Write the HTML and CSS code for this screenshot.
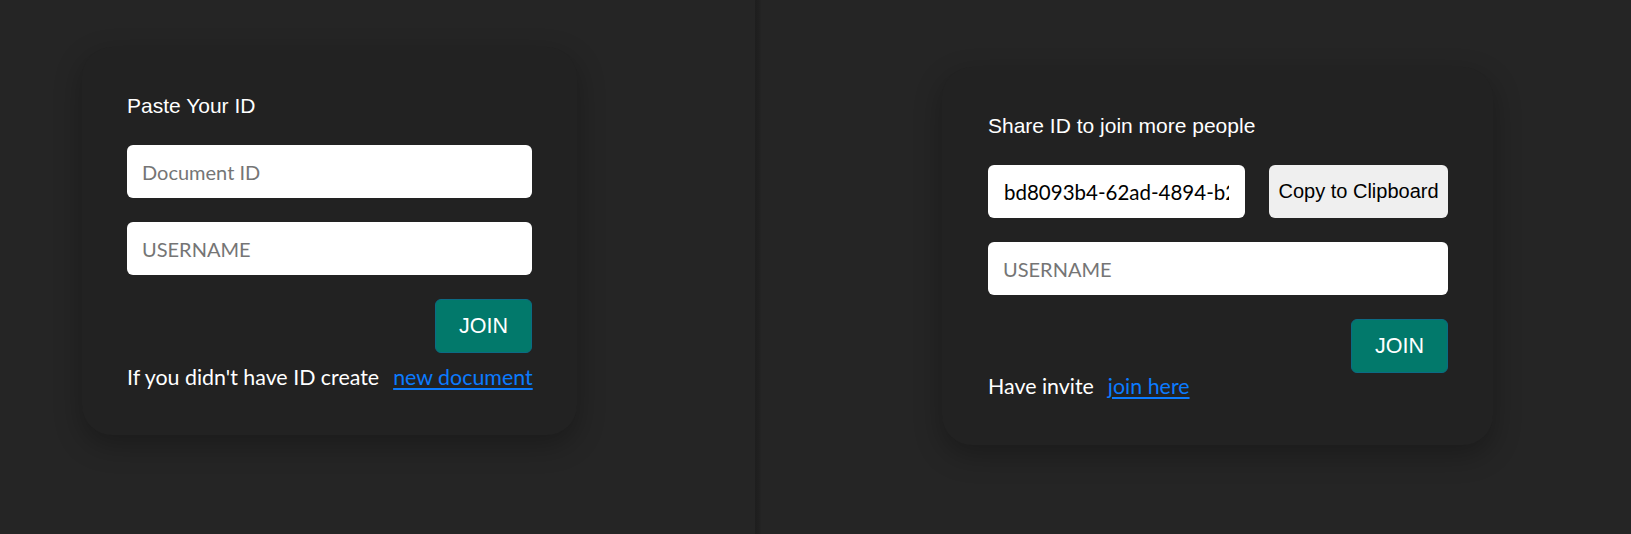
FILE: index.html
```html
<!DOCTYPE html>
<html lang="en">
<head>
<meta charset="utf-8">
<title>Join document</title>
<link rel="stylesheet" href="styles.css">
</head>
<body>
  <main class="split">
    <section class="panel panel-left">
      <form class="card card-join">
        <h2 class="card-title">Paste Your ID</h2>
        <input class="field field-first" type="text" placeholder="Document ID">
        <input class="field" type="text" placeholder="USERNAME">
        <div class="actions">
          <button class="btn-join" type="button">JOIN</button>
        </div>
        <p class="hint hint-left">If you didn't have ID create<a class="link" href="#">new document</a></p>
      </form>
    </section>
    <div class="divider"></div>
    <section class="panel panel-right">
      <form class="card card-share">
        <h2 class="card-title">Share ID to join more people</h2>
        <div class="id-row">
          <input class="field field-id" type="text" value="bd8093b4-62ad-4894-b212-5a7c9e1f03d4" readonly>
          <button class="btn-copy" type="button">Copy to Clipboard</button>
        </div>
        <input class="field" type="text" placeholder="USERNAME">
        <div class="actions">
          <button class="btn-join" type="button">JOIN</button>
        </div>
        <p class="hint hint-right">Have invite<a class="link" href="#">join here</a></p>
      </form>
    </section>
  </main>
</body>
</html>
```

FILE: styles.css
```css
* {
  box-sizing: border-box;
}

html, body {
  margin: 0;
  height: 100%;
}

body {
  background: #252525;
  font-family: "Liberation Sans", Arial, sans-serif;
  overflow: hidden;
}

.split {
  display: flex;
  height: 534px;
}

.panel {
  height: 100%;
}

.panel-left {
  width: 755px;
  padding: 47px 0 0 82px;
}

.panel-right {
  flex: 1;
  padding: 67px 0 0 181px;
}

.divider {
  width: 6px;
  height: 100%;
  background: linear-gradient(to right, #1e1e1e, #202020 60%, #242424);
}

.card {
  background: #222222;
  border-radius: 30px;
  box-shadow: 0 10px 28px rgba(0, 0, 0, 0.28);
  display: flex;
  flex-direction: column;
}

.card-join {
  width: 495px;
  padding: 47px 45px 46px 45px;
}

.card-share {
  width: 551px;
  padding: 47px 45px 47px 46px;
}

.card-title {
  margin: 0 0 27px;
  font-family: "Liberation Sans", Arial, sans-serif;
  font-weight: 400;
  font-size: 21px;
  line-height: 24px;
  color: #ffffff;
}

.field {
  display: block;
  width: 100%;
  height: 53px;
  border: none;
  border-radius: 6px;
  background: #ffffff;
  padding: 0 15px;
  font-family: "Lato", "Open Sans", sans-serif;
  font-size: 20px;
  color: #000000;
  outline: none;
}

.field::placeholder {
  color: #757575;
}

.field-first {
  margin-bottom: 24px;
}

.id-row {
  display: flex;
  gap: 24px;
  margin-bottom: 24px;
}

.field-id {
  flex: 1;
  min-width: 0;
  padding: 0 16px;
  font-size: 20.5px;
}

.btn-copy {
  width: 179px;
  height: 53px;
  flex: none;
  border: none;
  border-radius: 6px;
  background: #efefef;
  color: #000000;
  font-family: "Liberation Sans", Arial, sans-serif;
  font-size: 20px;
  padding: 0;
}

.actions {
  display: flex;
  justify-content: flex-end;
  margin-top: 24px;
}

.btn-join {
  height: 54px;
  width: 97px;
  border: 1px solid #0b6b84;
  border-radius: 6px;
  background: #02796b;
  color: #ffffff;
  font-family: "Liberation Sans", Arial, sans-serif;
  font-size: 21.5px;
  padding: 0;
}

.hint {
  margin: 0;
  font-family: "Lato", "Open Sans", sans-serif;
  font-size: 21.4px;
  line-height: 24px;
  color: #ffffff;
  white-space: nowrap;
}

.hint-left {
  margin-top: 12px;
}

.hint-right {
  margin-top: 1px;
}

.link {
  margin-left: 14px;
  color: #0b7bff;
  text-decoration: underline;
  text-underline-offset: 3px;
}
```
